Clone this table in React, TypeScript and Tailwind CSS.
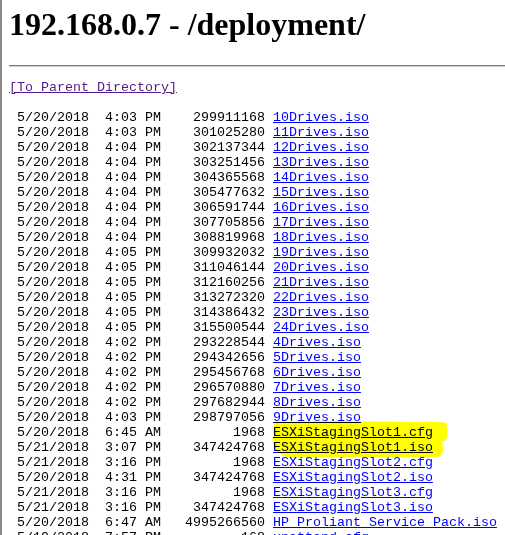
import React from "react";

type Row = { d: string; t: string; s: string; n: string };

const rows: Row[] = [
  { d: "5/20/2018", t: "4:03 PM", s: "299911168", n: "10Drives.iso" },
  { d: "5/20/2018", t: "4:03 PM", s: "301025280", n: "11Drives.iso" },
  { d: "5/20/2018", t: "4:04 PM", s: "302137344", n: "12Drives.iso" },
  { d: "5/20/2018", t: "4:04 PM", s: "303251456", n: "13Drives.iso" },
  { d: "5/20/2018", t: "4:04 PM", s: "304365568", n: "14Drives.iso" },
  { d: "5/20/2018", t: "4:04 PM", s: "305477632", n: "15Drives.iso" },
  { d: "5/20/2018", t: "4:04 PM", s: "306591744", n: "16Drives.iso" },
  { d: "5/20/2018", t: "4:04 PM", s: "307705856", n: "17Drives.iso" },
  { d: "5/20/2018", t: "4:04 PM", s: "308819968", n: "18Drives.iso" },
  { d: "5/20/2018", t: "4:05 PM", s: "309932032", n: "19Drives.iso" },
  { d: "5/20/2018", t: "4:05 PM", s: "311046144", n: "20Drives.iso" },
  { d: "5/20/2018", t: "4:05 PM", s: "312160256", n: "21Drives.iso" },
  { d: "5/20/2018", t: "4:05 PM", s: "313272320", n: "22Drives.iso" },
  { d: "5/20/2018", t: "4:05 PM", s: "314386432", n: "23Drives.iso" },
  { d: "5/20/2018", t: "4:05 PM", s: "315500544", n: "24Drives.iso" },
  { d: "5/20/2018", t: "4:02 PM", s: "293228544", n: "4Drives.iso" },
  { d: "5/20/2018", t: "4:02 PM", s: "294342656", n: "5Drives.iso" },
  { d: "5/20/2018", t: "4:02 PM", s: "295456768", n: "6Drives.iso" },
  { d: "5/20/2018", t: "4:02 PM", s: "296570880", n: "7Drives.iso" },
  { d: "5/20/2018", t: "4:02 PM", s: "297682944", n: "8Drives.iso" },
  { d: "5/20/2018", t: "4:03 PM", s: "298797056", n: "9Drives.iso" },
  { d: "5/20/2018", t: "6:45 AM", s: "1968", n: "ESXiStagingSlot1.cfg" },
  { d: "5/21/2018", t: "3:07 PM", s: "347424768", n: "ESXiStagingSlot1.iso" },
  { d: "5/21/2018", t: "3:16 PM", s: "1968", n: "ESXiStagingSlot2.cfg" },
  { d: "5/20/2018", t: "4:31 PM", s: "347424768", n: "ESXiStagingSlot2.iso" },
  { d: "5/21/2018", t: "3:16 PM", s: "1968", n: "ESXiStagingSlot3.cfg" },
  { d: "5/21/2018", t: "3:16 PM", s: "347424768", n: "ESXiStagingSlot3.iso" },
  { d: "5/20/2018", t: "6:47 AM", s: "4995266560", n: "HP Proliant Service Pack.iso" },
  { d: "5/19/2018", t: "7:57 PM", s: "168", n: "unattend.cfg" },
];

function prefix(r: Row) {
  return (
    r.d.padStart(10, " ") +
    " " +
    r.t.padStart(8, " ") +
    " " +
    r.s.padStart(12, " ") +
    " "
  );
}

export default function App() {
  return (
    <div className="relative h-[535px] w-[505px] overflow-hidden bg-white border-l-2 border-[#8a8a8a] pl-[7px]">
      <h1
        className="pt-[6px] text-[32px] leading-[37px] font-bold text-black whitespace-nowrap"
        style={{ fontFamily: '"Liberation Serif", "Times New Roman", serif' }}
      >
        192.168.0.7 - /deployment/
      </h1>
      <div className="mt-[22px] h-[2px] border-t border-[#7a7a7a] border-b border-b-[#d0d0d0]" />
      <div
        className="mt-[13px] whitespace-pre text-[13.333px] leading-[15px] text-black"
        style={{ fontFamily: '"Liberation Mono", "Courier New", monospace' }}
      >
        <div>
          <a className="text-[#551a8b] underline">[To Parent Directory]</a>
        </div>
        <div>{" "}</div>
        {rows.map((r, i) => (
          <div key={i}>
            {prefix(r)}
            <a className="text-[#0000ff] underline">{r.n}</a>
          </div>
        ))}
      </div>
      <svg
        className="absolute left-[266px] top-[418px] mix-blend-multiply pointer-events-none"
        width="186"
        height="44"
        viewBox="0 0 186 44"
      >
        <path
          d="M6 6 Q5 3 12 4 L60 3 L150 4 Q178 3 179 6 Q181 14 178 22 Q176 24 174 23 L175 30 Q175 38 170 39 L40 39 L22 40 Q14 38 8 33 Q4 28 5 20 Z"
          fill="#ffff00"
        />
      </svg>
    </div>
  );
}
